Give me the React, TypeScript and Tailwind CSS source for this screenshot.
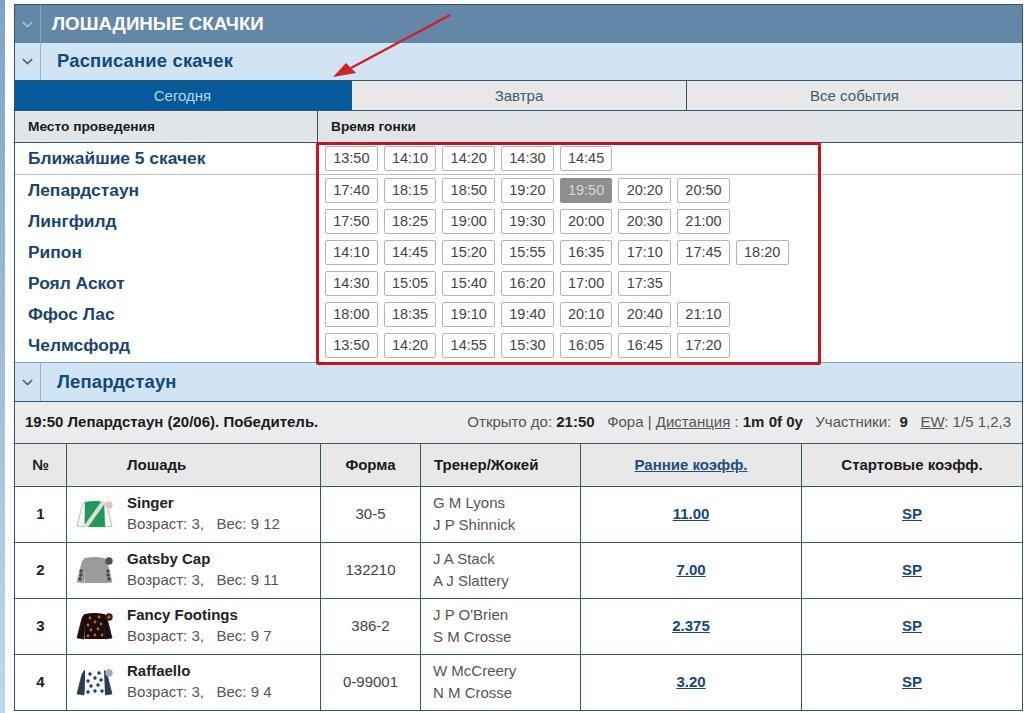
import React from 'react';
import { ChevronDown } from 'lucide-react';

const venues = [
  { name: 'Лепардстаун', times: ['17:40', '18:15', '18:50', '19:20', '19:50', '20:20', '20:50'] },
  { name: 'Лингфилд', times: ['17:50', '18:25', '19:00', '19:30', '20:00', '20:30', '21:00'] },
  { name: 'Рипон', times: ['14:10', '14:45', '15:20', '15:55', '16:35', '17:10', '17:45', '18:20'] },
  { name: 'Роял Аскот', times: ['14:30', '15:05', '15:40', '16:20', '17:00', '17:35'] },
  { name: 'Ффос Лас', times: ['18:00', '18:35', '19:10', '19:40', '20:10', '20:40', '21:10'] },
  { name: 'Челмсфорд', times: ['13:50', '14:20', '14:55', '15:30', '16:05', '16:45', '17:20'] },
];

const runners = [
  { no: 1, horse: 'Singer', age: 3, weight: '9 12', form: '30-5', trainer: 'G M Lyons', jockey: 'J P Shinnick', odds: '11.00', silk: 'green' },
  { no: 2, horse: 'Gatsby Cap', age: 3, weight: '9 11', form: '132210', trainer: 'J A Stack', jockey: 'A J Slattery', odds: '7.00', silk: 'grey' },
  { no: 3, horse: 'Fancy Footings', age: 3, weight: '9 7', form: '386-2', trainer: "J P O'Brien", jockey: 'S M Crosse', odds: '2.375', silk: 'black' },
  { no: 4, horse: 'Raffaello', age: 3, weight: '9 4', form: '0-99001', trainer: 'W McCreery', jockey: 'N M Crosse', odds: '3.20', silk: 'white' },
];

const BODY = 'M9 2 Q18 0 28 2 L29 27 L9 27 Z';
const SLEEVE_L = 'M9 2 Q6 4 5 10 L1 26 L8 27 L9 13 Z';
const SLEEVE_R = 'M28 2 Q31 4 32 10 L36 26 L29 27 L28 13 Z';

const silkColors: Record<string, { body: string; sleeve: string; cap: string }> = {
  green: { body: '#1f9a5c', sleeve: '#f6f8f6', cap: '#ecc0c6' },
  grey: { body: '#9b9b9b', sleeve: '#9b9b9b', cap: '#4d5054' },
  black: { body: '#1c0c0a', sleeve: '#1c0c0a', cap: '#3a2014' },
  white: { body: '#f4f6f8', sleeve: '#2a3c4e', cap: '#a8a8a8' },
};

const bodyDots = [[14, 6], [23, 5], [12, 13], [19, 10], [25, 12], [15, 18], [22, 17], [12, 24], [19, 23], [26, 23]];
const greyDots = [[5, 15], [5, 19], [4, 23], [32, 15], [32, 19], [33, 23]];

const Silk = ({ kind }: { kind: string }) => {
  const c = silkColors[kind];
  return (
    <svg width="38" height="30" viewBox="0 0 38 30" className="shrink-0">
      <path d={SLEEVE_L} fill={c.sleeve} stroke={kind === 'green' ? '#9aa59c' : c.sleeve} strokeWidth="0.7" />
      <path d={SLEEVE_R} fill={c.sleeve} stroke={kind === 'green' ? '#9aa59c' : c.sleeve} strokeWidth="0.7" />
      <path d={BODY} fill={c.body} />
      {kind === 'green' && <path d="M30 2 L12 27 L7 27 L25 2 Z" fill="#dcdfd8" />}
      {kind === 'grey' && greyDots.map(([x, y]) => <circle key={`${x}-${y}`} cx={x} cy={y} r="1.7" fill="#43474b" />)}
      {kind === 'black' && bodyDots.map(([x, y]) => <circle key={`${x}-${y}`} cx={x} cy={y} r="1.4" fill="#b4683a" />)}
      {kind === 'white' && bodyDots.map(([x, y]) => <circle key={`${x}-${y}`} cx={x} cy={y} r="1.7" fill="#2a3c4e" />)}
      <circle cx="33" cy="5" r="3.7" fill={c.cap} />
      {kind === 'black' && <circle cx="33" cy="5" r="1.6" fill="#b4683a" />}
    </svg>
  );
};

const TimeButton = ({ t, active }: { t: string; active?: boolean }) => (
  <span
    className={`w-[52.7px] h-[25px] flex items-center justify-center rounded-[2px] border text-[14.5px] ${
      active ? 'bg-[#8e8e8e] border-[#8e8e8e] text-[#d8d8d8]' : 'bg-white border-[#b4b4b4] text-[#444]'
    }`}
  >
    {t}
  </span>
);

const SectionBar = ({ title, h }: { title: string; h: string }) => (
  <div className={`flex items-stretch bg-[#d0e4f3] border-b border-[#33566f] ${h}`}>
    <div className="w-[26px] border-r border-[#9db5c6] flex items-center justify-center text-[#4a6a80]">
      <ChevronDown size={17} strokeWidth={2} />
    </div>
    <div className="flex items-center pl-[16px] pb-[1px] text-[18.4px] tracking-[0.2px] font-bold text-[#0f4a7c]">{title}</div>
  </div>
);

const colsClass = 'grid grid-cols-[52px_254px_100px_160px_221px_1fr]';

export default function App() {
  return (
    <div className="relative h-[713px] w-[1024px] overflow-hidden bg-white font-['Liberation_Sans',Arial,sans-serif]">
      <div className="absolute left-0 top-0 h-full w-[5px] bg-gradient-to-b from-[#7fa5c6] to-[#bcd8ee]" />

      <div className="ml-[14px] mr-[1px] mt-[4px] border-x border-t border-[#2f5470]">
        <div className="flex items-stretch h-[38px] bg-[#6387a6]">
          <div className="w-[26px] border-r border-[#8ba6bd] flex items-center justify-center text-[#a9c1d4]">
            <ChevronDown size={17} strokeWidth={2} />
          </div>
          <div className="flex items-center pl-[11px] text-[18.7px] font-bold text-white">ЛОШАДИНЫЕ СКАЧКИ</div>
        </div>

        <SectionBar title="Расписание скачек" h="h-[38px]" />

        <div className="grid grid-cols-[337px_335px_1fr] h-[30px] text-[15px] border-b border-[#33566f]">
          <div className="flex items-center justify-center pr-[2px] pt-[2px] bg-[#055a9c] text-[#bcd6ea]">Сегодня</div>
          <div className="flex items-center justify-center pt-[2px] bg-[#e8e8e8] text-[#405a70] border-r border-[#33566f]">Завтра</div>
          <div className="flex items-center justify-center pt-[2px] bg-[#e8e8e8] text-[#405a70]">Все события</div>
        </div>

        <div className="grid grid-cols-[303px_1fr] h-[32px] bg-[#e2e5e8] border-b border-[#33566f] text-[13.7px] font-bold text-[#1a1a1a]">
          <div className="flex items-center pl-[13px] pt-[2px] border-r border-[#33566f]">Место проведения</div>
          <div className="flex items-center pl-[13px] pt-[2px]">Время гонки</div>
        </div>

        <div className="grid grid-cols-[303px_1fr] h-[32px] border-b border-[#bcc2c6]">
          <div className="flex items-center pl-[13px] text-[17.4px] font-bold text-[#18466e] border-r border-[#bcc2c6]">Ближайшие 5 скачек</div>
          <div className="flex items-center gap-[6px] pl-[7px]">
            {['13:50', '14:10', '14:20', '14:30', '14:45'].map((t) => (
              <TimeButton key={t} t={t} />
            ))}
          </div>
        </div>

        <div className="pb-[1px]">
          {venues.map((v) => (
            <div key={v.name} className="grid grid-cols-[303px_1fr] h-[31px]">
              <div className="flex items-center pl-[13px] text-[17.4px] font-bold text-[#18466e] border-r border-[#e4e6e8]">{v.name}</div>
              <div className="flex items-center gap-[6px] pl-[7px]">
                {v.times.map((t) => (
                  <TimeButton key={t} t={t} active={v.name === 'Лепардстаун' && t === '19:50'} />
                ))}
              </div>
            </div>
          ))}
        </div>

        <div className="border-t border-[#8fa0ac]">
          <SectionBar title="Лепардстаун" h="h-[39px]" />
        </div>

        <div className="flex items-center justify-between h-[42px] pl-[10px] pr-[11px] bg-[#ececec] border-b border-[#33566f] text-[15px] text-[#555]">
          <span className="font-bold text-[#1a1a1a]">19:50 Лепардстаун (20/06). Победитель.</span>
          <span className="whitespace-pre">
            Открыто до: <b className="text-[#222]">21:50</b>{'   '}Фора | <span className="underline">Дистанция</span> : <b className="text-[#222]">1m 0f 0y</b>{'   '}Участники:{'  '}<b className="text-[#222]">9</b>{'   '}<span className="underline">EW</span>: 1/5 1,2,3
          </span>
        </div>

        <div className={`${colsClass} h-[43px] bg-[#e8e8e8] border-b border-[#33566f] text-[15px] font-bold text-[#1a1a1a]`}>
          <div className="flex items-center justify-center border-r border-[#33566f]">№</div>
          <div className="flex items-center pl-[60px] border-r border-[#33566f]">Лошадь</div>
          <div className="flex items-center justify-center border-r border-[#33566f]">Форма</div>
          <div className="flex items-center pl-[13px] border-r border-[#33566f]">Тренер/Жокей</div>
          <div className="flex items-center justify-center border-r border-[#33566f]">
            <span className="underline text-[#1f4f80]">Ранние коэфф.</span>
          </div>
          <div className="flex items-center justify-center">Стартовые коэфф.</div>
        </div>

        {runners.map((r) => (
          <div key={r.no} className={`${colsClass} h-[56px] border-b border-[#33566f]`}>
            <div className="flex items-center justify-center border-r border-[#33566f] text-[15px] font-bold text-[#222]">{r.no}</div>
            <div className="flex items-center pl-[9px] gap-[13px] border-r border-[#33566f]">
              <Silk kind={r.silk} />
              <div className="flex flex-col gap-[3px] pb-[2px]">
                <span className="text-[15px] leading-[18px] font-bold text-[#222]">{r.horse}</span>
                <span className="text-[15px] leading-[18px] text-[#555] whitespace-pre">{`Возраст: ${r.age},   Вес: ${r.weight}`}</span>
              </div>
            </div>
            <div className="flex items-center justify-center border-r border-[#33566f] text-[15px] text-[#444]">{r.form}</div>
            <div className="flex flex-col justify-center gap-[3px] pl-[12px] pb-[2px] border-r border-[#33566f] text-[15px] leading-[19px] text-[#555]">
              <span>{r.trainer}</span>
              <span>{r.jockey}</span>
            </div>
            <div className="flex items-center justify-center border-r border-[#33566f]">
              <span className="text-[15px] font-bold underline text-[#14477a]">{r.odds}</span>
            </div>
            <div className="flex items-center justify-center">
              <span className="text-[15px] font-bold underline text-[#14477a]">SP</span>
            </div>
          </div>
        ))}
      </div>

      {/* annotation overlay */}
      <div className="absolute left-[316px] top-[142px] w-[505px] h-[223px] border-[3px] border-[#c4161f] rounded-[2px]" />
      <svg className="absolute left-[325px] top-[8px]" width="135" height="75" viewBox="0 0 135 75">
        <path d="M125 7 L26 60" stroke="#cf2129" strokeWidth="2.5" />
        <path d="M8 69 L21 55 L31 65 Z" fill="#cf2129" />
      </svg>
    </div>
  );
}
